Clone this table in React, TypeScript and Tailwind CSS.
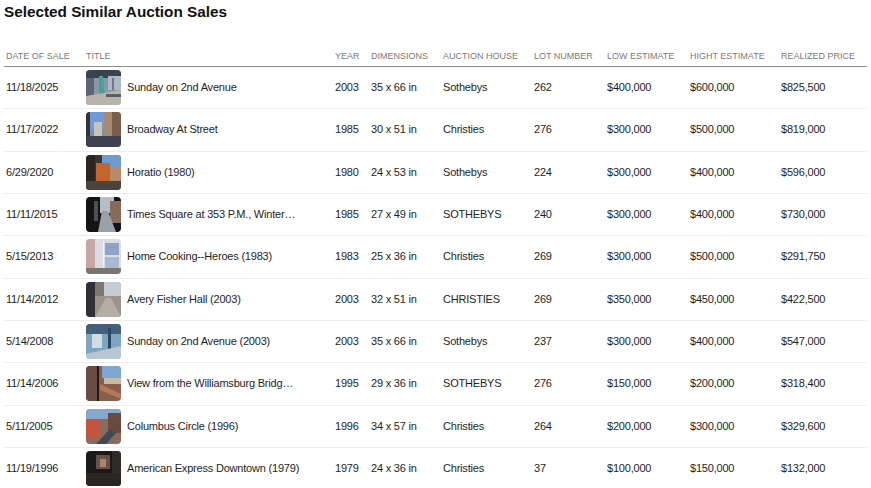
import React from "react";

type Row = [string, string, string, string, string, string, string, string, string];

const rows: Row[] = [
  ["11/18/2025", "Sunday on 2nd Avenue", "2003", "35 x 66 in", "Sothebys", "262", "$400,000", "$600,000", "$825,500"],
  ["11/17/2022", "Broadway At Street", "1985", "30 x 51 in", "Christies", "276", "$300,000", "$500,000", "$819,000"],
  ["6/29/2020", "Horatio (1980)", "1980", "24 x 53 in", "Sothebys", "224", "$300,000", "$400,000", "$596,000"],
  ["11/11/2015", "Times Square at 353 P.M., Winter…", "1985", "27 x 49 in", "SOTHEBYS", "240", "$300,000", "$400,000", "$730,000"],
  ["5/15/2013", "Home Cooking--Heroes (1983)", "1983", "25 x 36 in", "Christies", "269", "$300,000", "$500,000", "$291,750"],
  ["11/14/2012", "Avery Fisher Hall (2003)", "2003", "32 x 51 in", "CHRISTIES", "269", "$350,000", "$450,000", "$422,500"],
  ["5/14/2008", "Sunday on 2nd Avenue (2003)", "2003", "35 x 66 in", "Sothebys", "237", "$300,000", "$400,000", "$547,000"],
  ["11/14/2006", "View from the Williamsburg Bridg…", "1995", "29 x 36 in", "SOTHEBYS", "276", "$150,000", "$200,000", "$318,400"],
  ["5/11/2005", "Columbus Circle (1996)", "1996", "34 x 57 in", "Christies", "264", "$200,000", "$300,000", "$329,600"],
  ["11/19/1996", "American Express Downtown (1979)", "1979", "24 x 36 in", "Christies", "37", "$100,000", "$150,000", "$132,000"],
];

const headers = [
  "DATE OF SALE",
  "TITLE",
  "YEAR",
  "DIMENSIONS",
  "AUCTION HOUSE",
  "LOT NUMBER",
  "LOW ESTIMATE",
  "HIGHT ESTIMATE",
  "REALIZED PRICE",
];

function Thumb({ i }: { i: number }) {
  const shapes: React.ReactNode[] = [];
  switch (i) {
    case 0:
      shapes.push(
        <rect key="a" x="0" y="0" width="35" height="35" fill="#8a97a6" />,
        <rect key="b" x="0" y="0" width="35" height="8" fill="#3b4350" />,
        <rect key="c" x="0" y="8" width="8" height="27" fill="#5b6674" />,
        <rect key="d" x="22" y="6" width="13" height="14" fill="#aeb9c6" />,
        <rect key="d2" x="26" y="8" width="2" height="12" fill="#6e7886" />,
        <polygon key="e" points="13,6 17,6 19,35 13,35" fill="#3fa39a" />,
        <polygon key="f" points="0,26 35,20 35,35 0,35" fill="#b8b4ad" />,
        <rect key="g" x="20" y="24" width="15" height="3" fill="#5a5f66" />
      );
      break;
    case 1:
      shapes.push(
        <rect key="a" x="0" y="0" width="35" height="35" fill="#7f8fa6" />,
        <rect key="b" x="0" y="0" width="20" height="18" fill="#6f9ad8" />,
        <rect key="c" x="0" y="0" width="4" height="35" fill="#2f3238" />,
        <rect key="d" x="18" y="0" width="17" height="24" fill="#a88a70" />,
        <rect key="e" x="26" y="0" width="9" height="24" fill="#7a5d4b" />,
        <rect key="f" x="8" y="10" width="8" height="14" fill="#c9c2b8" />,
        <rect key="g" x="0" y="24" width="35" height="11" fill="#3e4250" />
      );
      break;
    case 2:
      shapes.push(
        <rect key="a" x="0" y="0" width="35" height="35" fill="#3a3530" />,
        <rect key="b" x="16" y="0" width="19" height="14" fill="#6e9ad0" />,
        <rect key="c" x="10" y="8" width="14" height="18" fill="#c4642e" />,
        <rect key="d" x="24" y="12" width="11" height="14" fill="#b88a68" />,
        <rect key="e" x="0" y="0" width="9" height="35" fill="#2a2522" />,
        <rect key="f" x="0" y="26" width="35" height="9" fill="#4a4440" />
      );
      break;
    case 3:
      shapes.push(
        <rect key="a" x="0" y="0" width="35" height="35" fill="#141414" />,
        <rect key="b" x="14" y="0" width="14" height="16" fill="#b9bec6" />,
        <rect key="c" x="24" y="4" width="11" height="22" fill="#8a6a5a" />,
        <polygon key="d" points="12,35 16,14 22,14 30,35" fill="#9aa0a8" />,
        <rect key="e" x="8" y="4" width="4" height="20" fill="#4a5058" />
      );
      break;
    case 4:
      shapes.push(
        <rect key="a" x="0" y="0" width="35" height="35" fill="#d8dde6" />,
        <rect key="b" x="0" y="0" width="9" height="35" fill="#c9a6a6" />,
        <rect key="c" x="17" y="2" width="1" height="33" fill="#f4f4f4" />,
        <rect key="d" x="19" y="4" width="14" height="12" fill="#8fa3c4" />,
        <rect key="e" x="19" y="18" width="14" height="12" fill="#a9b7cf" />,
        <rect key="f" x="0" y="29" width="35" height="6" fill="#7c7470" />
      );
      break;
    case 5:
      shapes.push(
        <rect key="a" x="0" y="0" width="35" height="35" fill="#7d776f" />,
        <rect key="b" x="18" y="0" width="17" height="14" fill="#c6ccd6" />,
        <rect key="c" x="0" y="0" width="9" height="35" fill="#2f3136" />,
        <rect key="d" x="9" y="14" width="26" height="21" fill="#9c948a" />,
        <polygon key="e" points="9,35 20,16 25,16 35,35" fill="#b5aea4" />
      );
      break;
    case 6:
      shapes.push(
        <rect key="a" x="0" y="0" width="35" height="35" fill="#7fa5c2" />,
        <rect key="b" x="0" y="0" width="35" height="10" fill="#45607a" />,
        <rect key="c" x="6" y="10" width="10" height="14" fill="#cfdce6" />,
        <rect key="d" x="22" y="4" width="3" height="31" fill="#2d4a62" />,
        <polygon key="e" points="0,30 35,22 35,35 0,35" fill="#b9c7d2" />
      );
      break;
    case 7:
      shapes.push(
        <rect key="a" x="0" y="0" width="35" height="35" fill="#8a5e4c" />,
        <rect key="b" x="16" y="0" width="19" height="12" fill="#7ea6d2" />,
        <rect key="c" x="0" y="0" width="12" height="35" fill="#6a4c42" />,
        <rect key="d" x="11" y="0" width="2" height="35" fill="#1a1a1a" />,
        <polygon key="e" points="14,18 35,28 35,33 14,24" fill="#b4785a" />,
        <rect key="f" x="18" y="12" width="17" height="6" fill="#c8b8a8" />
      );
      break;
    case 8:
      shapes.push(
        <rect key="a" x="0" y="0" width="35" height="35" fill="#8a6a5c" />,
        <rect key="b" x="0" y="0" width="35" height="10" fill="#86a8cc" />,
        <rect key="c" x="0" y="10" width="14" height="18" fill="#c4543e" />,
        <rect key="d" x="22" y="4" width="13" height="20" fill="#6a4a3e" />,
        <polygon key="e" points="10,35 24,20 30,24 20,35" fill="#3f4a56" />
      );
      break;
    default:
      shapes.push(
        <rect key="a" x="0" y="0" width="35" height="35" fill="#1c1a19" />,
        <rect key="b" x="10" y="4" width="14" height="14" fill="#6b4f44" />,
        <rect key="c" x="14" y="8" width="6" height="8" fill="#a3887a" />,
        <rect key="d" x="26" y="0" width="9" height="35" fill="#2e2b29" />,
        <rect key="e" x="0" y="22" width="35" height="13" fill="#2a2624" />
      );
  }
  return (
    <div className="w-[35px] h-[35px] shrink-0 overflow-hidden rounded-[4px]">
      <svg width="35" height="35" viewBox="0 0 35 35">
        {shapes}
      </svg>
    </div>
  );
}

const gridCols =
  "grid grid-cols-[80px_249px_36px_72px_91px_73px_83px_91px_1fr] pl-[2px]";

export default function App() {
  return (
    <div
      className="w-[871px] h-[488px] overflow-hidden bg-white"
      style={{ fontFamily: '"Liberation Sans", Arial, sans-serif' }}
    >
      <div className="h-[24px] pl-[4px] flex items-center text-[15.3px] font-bold text-[#111] leading-none">
        Selected Similar Auction Sales
      </div>
      <div className="ml-[4px] w-[863px] mt-[22px]">
        <div className={`${gridCols} h-[21px] items-center border-b border-[#8e8e8e] text-[9px] text-[#7a7a7a] leading-none`}>
          {headers.map((h) => (
            <div key={h} className="whitespace-nowrap">
              {h}
            </div>
          ))}
        </div>
        {rows.map((r, i) => (
          <div
            key={i}
            className={`${gridCols} h-[42.33px] items-center border-b border-[#ededed] text-[11px] tracking-[-0.2px] text-[#1e1e1e] leading-none`}
          >
            <div className="whitespace-nowrap">{r[0]}</div>
            <div className="flex items-center gap-[6px] whitespace-nowrap">
              <Thumb i={i} />
              <span>{r[1]}</span>
            </div>
            {r.slice(2).map((c, j) => (
              <div key={j} className="whitespace-nowrap">
                {c}
              </div>
            ))}
          </div>
        ))}
      </div>
    </div>
  );
}
